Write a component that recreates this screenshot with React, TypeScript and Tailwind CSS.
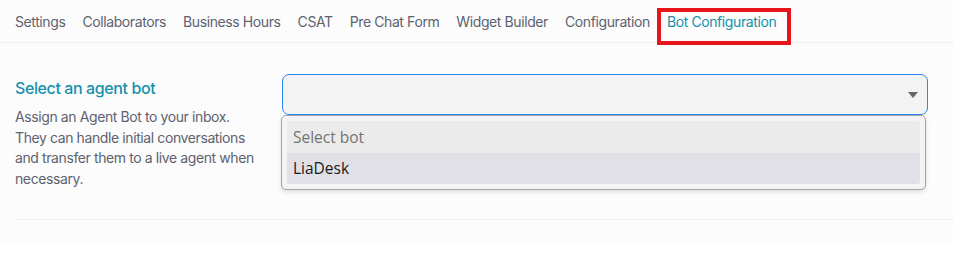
const tabs = [
  'Settings',
  'Collaborators',
  'Business Hours',
  'CSAT',
  'Pre Chat Form',
  'Widget Builder',
  'Configuration',
  'Bot Configuration',
];

const App = () => {
  const active = 'Bot Configuration';

  return (
    <div className="w-[953px] h-[254px] bg-white font-['Inter',sans-serif] tracking-[-0.025em]">
      <div className="h-[243px] bg-[#fcfcfc]">
        {/* tabs */}
        <div className="h-[43px] border-b border-[#efefef] flex items-center gap-[17px] pl-[15px] text-[14px] text-[#5d6270]">
          {tabs.map((t) =>
            t === active ? (
              <div
                key={t}
                className="relative h-full flex items-center text-[#1690ab]"
              >
                <span className="absolute left-[-10px] right-[-15px] top-[8px] bottom-[-3px] border-[4px] border-[#e8141c]" />
                {t}
              </div>
            ) : (
              <div key={t} className="h-full flex items-center">
                {t}
              </div>
            )
          )}
        </div>

        {/* settings row */}
        <div className="pl-[15px]">
          <div className="flex pt-[31px] pb-[30px] border-b border-[#eeeeee]">
            <div className="w-[267px] shrink-0 pr-[20px]">
              <h3 className="text-[16px] leading-[28px] font-medium text-[#1690ab]">
                Select an agent bot
              </h3>
              <p className="mt-[5px] text-[14px] leading-[20.5px] text-[#5d6270]">
                Assign an Agent Bot to your inbox. They can handle initial
                conversations and transfer them to a live agent when necessary.
              </p>
            </div>

            <div className="flex-1 mr-[25px]">
              <div className="relative">
                <div className="h-[41px] rounded-[7px] border border-[#2b86f5] bg-[#f3f3f3] flex items-center justify-end pr-[9px]">
                  <svg width="10" height="6" viewBox="0 0 10 6">
                    <path d="M0 0h10L5 6z" fill="#666" />
                  </svg>
                </div>

                {/* open native listbox */}
                <div className="absolute left-[-1px] right-[2px] top-[41px] z-10 rounded-[5px] border border-[#a3a3a3] bg-[#f4f4f4] p-[5px] shadow-[0_2px_4px_rgba(0,0,0,0.12)] font-['Open_Sans',sans-serif] text-[15.5px] tracking-normal">
                  <div className="h-[32px] rounded-t-[3px] bg-[#ebebeb] flex items-center px-[6px] pt-[1px] text-[#737373]">
                    Select bot
                  </div>
                  <div className="h-[31px] rounded-b-[3px] bg-[#e1e0e6] flex items-center px-[6px] pt-[1px] text-[#1a1a1a]">
                    LiaDesk
                  </div>
                </div>
              </div>
            </div>
          </div>
        </div>
      </div>
    </div>
  );
};

export default App;
